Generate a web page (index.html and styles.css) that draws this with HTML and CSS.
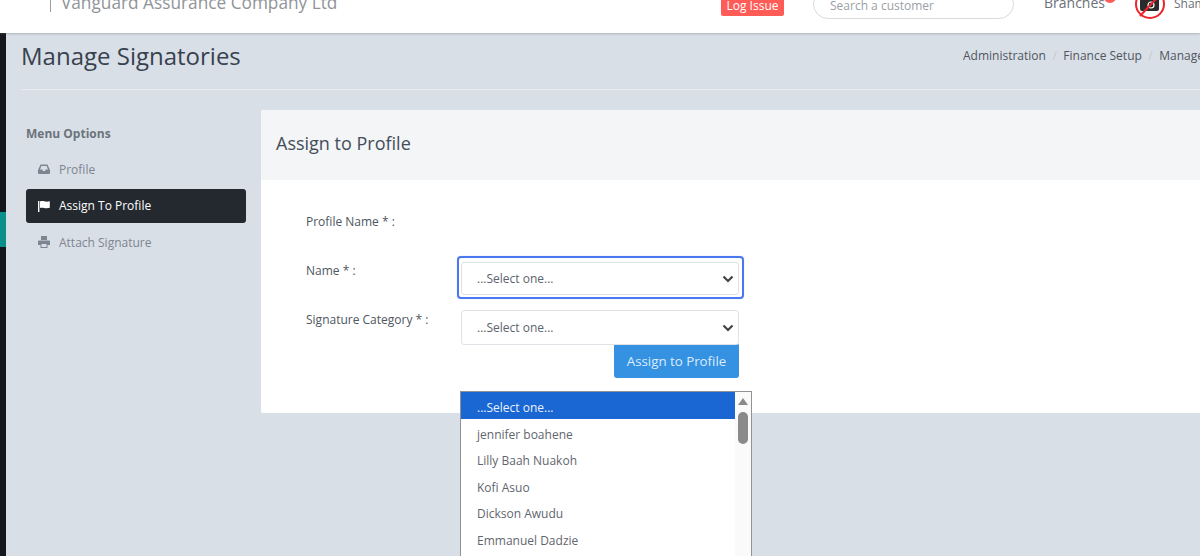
FILE: index.html
```html
<!DOCTYPE html>
<html lang="en">
<head>
<meta charset="utf-8">
<title>Manage Signatories</title>
<link rel="stylesheet" href="styles.css">
</head>
<body>
<header class="topbar">
  <div class="company"><span class="pipe"></span>Vanguard Assurance Company Ltd</div>
  <div class="top-right">
    <span class="log-issue">Log Issue</span>
    <span class="search">Search a customer</span>
    <span class="branches">Branches<i class="badge"></i></span>
    <svg class="avatar" width="32" height="20" viewBox="0 0 32 20">
      <rect x="6" y="-4" width="19" height="15" rx="2" fill="#2b2b2b"/>
      <circle cx="17" cy="5" r="3" fill="none" stroke="#fff" stroke-width="1.2"/>
      <circle cx="16" cy="4" r="14" fill="none" stroke="#f0222a" stroke-width="2"/>
      <path d="M6 16 L23 -2" stroke="#f0222a" stroke-width="2"/>
    </svg>
    <span class="user">Shamsu Deen</span>
  </div>
</header>
<div class="layout">
  <div class="rail"><div class="rail-teal"></div></div>
  <main class="main">
    <div class="page-head">
      <h1>Manage Signatories</h1>
      <nav class="crumbs">
        <span>Administration</span><b>/</b><span>Finance Setup</span><b>/</b><span>Manage Signatories</span>
      </nav>
    </div>
    <div class="columns">
      <aside class="menu">
        <h2>Menu Options</h2>
        <a class="item">
          <svg width="12" height="12" viewBox="0 0 12 12"><path d="M2.6 1.500h6.800L12 7v3a1 1 0 0 1-1 1H1a1 1 0 0 1-1-1V7zM3.400 3L2 6.500h2.400L5 8h2l.6-1.500H10L8.600 3z" fill="#7d8590" fill-rule="evenodd"/></svg>
          Profile</a>
        <a class="item active">
          <svg width="13" height="12" viewBox="0 0 13 12"><path d="M0 1h1.400v11H0zM2 1.600c3-1.600 5 1 9.800-.4v6.600C7 9.200 5 6.800 2 8z" fill="#fff"/></svg>
          Assign To Profile</a>
        <a class="item">
          <svg width="12" height="12" viewBox="0 0 12 12"><path d="M3 0h6v4H3zM1 4.500h10a1 1 0 0 1 1 1V9H9.500v3h-7V9H0V5.500a1 1 0 0 1 1-1zM3.500 8v3h5V8z" fill="#7d8590" fill-rule="evenodd"/></svg>
          Attach Signature</a>
      </aside>
      <section class="panel">
        <div class="panel-head">Assign to Profile</div>
        <form class="panel-body">
          <div class="row row-profile"><label>Profile Name * :</label></div>
          <div class="row">
            <label>Name * :</label>
            <div class="focus-ring"><div class="select">...Select one...<svg class="chev" width="12" height="8" viewBox="0 0 12 8"><path d="M1.500 1.500L6 6l4.500-4.500" fill="none" stroke="#444" stroke-width="2.200"/></svg></div></div>
          </div>
          <div class="row">
            <label>Signature Category * :</label>
            <div class="select plain">...Select one...<svg class="chev" width="12" height="8" viewBox="0 0 12 8"><path d="M1.500 1.500L6 6l4.500-4.500" fill="none" stroke="#444" stroke-width="2.200"/></svg></div>
          </div>
          <div class="actions"><button type="button" class="btn">Assign to Profile</button></div>
        </form>
      </section>
    </div>
  </main>
</div>
<div class="dropdown">
  <ul class="options">
    <li class="selected">...Select one...</li>
    <li>jennifer boahene</li>
    <li>Lilly Baah Nuakoh</li>
    <li>Kofi Asuo</li>
    <li>Dickson Awudu</li>
    <li>Emmanuel Dadzie</li>
    <li>Samuel Owusu</li>
  </ul>
  <div class="scrollbar">
    <svg width="10" height="7" viewBox="0 0 10 7"><path d="M5 0L10 7H0z" fill="#8a8a8a"/></svg>
    <div class="thumb"></div>
  </div>
</div>
</body>
</html>
```
FILE: styles.css
```css
* { box-sizing: border-box; }
html, body { margin: 0; height: 556px; overflow: hidden; }
body {
  background: #d9dfe7;
  font-family: "Open Sans", "Noto Sans", sans-serif;
  font-size: 12px;
  color: #4e5660;
  position: relative;
}
.topbar {
  height: 33px;
  background: #fff;
  box-shadow: 0 1px 2px rgba(90, 100, 110, .35);
  position: relative;
  z-index: 2;
  overflow: hidden;
  display: flex;
  justify-content: space-between;
  align-items: flex-end;
}
.company {
  margin-left: 50px;
  font-size: 17.25px;
  line-height: 22px;
  height: 22px;
  margin-bottom: 19px;
  color: #909498;
  display: flex;
  white-space: nowrap;
}
.pipe { width: 1px; height: 20px; background: #9aa0a6; margin-right: 10px; flex: none; }
.top-right { display: flex; align-items: flex-end; flex: none; width: 479px; white-space: nowrap; }
.log-issue {
  background: #ff5b57;
  color: #fff;
  width: 63px;
  height: 24px;
  margin-bottom: 17px;
  border-radius: 2px;
  text-align: center;
  font-size: 12px;
  padding-top: 5px;
  line-height: 17px;
  flex: none;
}
.search {
  width: 201px;
  height: 30px;
  margin: 0 0 14px 29px;
  border: 1px solid #d8dadd;
  border-radius: 15px;
  padding: 9px 0 0 16px;
  color: #9aa0a6;
  font-size: 12px;
  line-height: 14px;
  flex: none;
}
.branches {
  margin: 0 0 21px 30px;
  font-size: 14px;
  line-height: 18px;
  color: #6a7077;
  position: relative;
  width: 91px;
  flex: none;
}
.badge {
  position: absolute;
  left: 60px;
  top: 3px;
  width: 12px;
  height: 6px;
  border-radius: 0 0 6px 6px;
  background: #ff5b57;
}
.avatar { flex: none; margin: 0 0 13px -1px; overflow: visible; }
.user { margin: 0 0 20px 8px; font-size: 12px; line-height: 18px; color: #6a7077; }
.layout { display: flex; height: 523px; }
.rail {
  width: 6px;
  flex: none;
  background: #14181c;
  padding-top: 179px;
}
.rail-teal { height: 35px; background: #0a8f8a; }
.main { flex: 1; padding: 0 0 0 15px; min-width: 0; }
.page-head {
  display: flex;
  justify-content: space-between;
  align-items: center;
  height: 57px;
  margin-bottom: 20px;
  border-bottom: 1px solid #e7ebf0;
  white-space: nowrap;
  margin-right: -400px;
}
h1 {
  margin: 0 0 11px;
  font-weight: 400;
  font-size: 24px;
  line-height: 46px;
  color: #37424e;
}
.crumbs {
  display: flex;
  width: 637px;
  flex: none;
  font-size: 12px;
  color: #4e5660;
  margin-bottom: 12px;
}
.crumbs b { font-weight: 400; color: #c3c9cf; margin: 0 6.5px; }
.columns { display: flex; }
.menu { width: 225px; padding-left: 5px; flex: none; }
.menu h2 {
  margin: 14px 0 0;
  font-size: 12px;
  line-height: 20px;
  font-weight: 700;
  color: #6c737b;
}
.item {
  display: flex;
  align-items: center;
  height: 34px;
  margin-top: 3px;
  padding-left: 12px;
  gap: 9px;
  border-radius: 3px;
  color: #7d8590;
  font-size: 12px;
}
.menu h2 + .item { margin-top: 8px; }
.item.active { background: #24282f; color: #fff; gap: 8px; margin-bottom: -1px; line-height: 33px; padding-bottom: 1px; }
.panel {
  width: 1000px;
  flex: none;
  margin-left: 15px;
  background: #fff;
  height: 303px;
  border-radius: 2px 0 0 2px;
  overflow: hidden;
}
.panel-head {
  height: 70px;
  background: #f3f5f7;
  padding-left: 15px;
  font-size: 18px;
  line-height: 66px;
  color: #434d58;
}
.panel-body { padding: 33px 0 0 45px; }
.row { display: flex; align-items: flex-start; height: 49px; }
.row label { width: 155px; flex: none; line-height: 17px; color: #4e5660; }
.select {
  width: 278px;
  height: 35px;
  background: #fff;
  border: 1px solid #dfe2e6;
  border-radius: 3px;
  padding-left: 15px;
  line-height: 33px;
  color: #5c646d;
  position: relative;
  flex: none;
}
.select.plain { margin-top: -1px; }
.chev { position: absolute; right: 4px; top: 13px; }
.focus-ring {
  margin: -6px 0 0 -4px;
  padding: 4px 3px 0 2px;
  border: 2px solid #4a78f0;
  border-radius: 4px;
  width: 287px;
  height: 43px;
  box-shadow: 0 0 1px rgba(74, 120, 240, .5);
  flex: none;
}
.focus-ring .select { height: 33px; line-height: 31px; }
.focus-ring .chev { top: 12px; }
.actions { width: 433px; display: flex; justify-content: flex-end; margin-top: -17px; }
.btn {
  width: 125px;
  height: 35px;
  border: 0;
  border-radius: 3px;
  background: #3592e3;
  color: #dcebfa;
  font: 13.3px "Open Sans", sans-serif;
  padding: 0;
}
.dropdown {
  position: absolute;
  left: 460px;
  top: 391px;
  width: 292px;
  height: 190px;
  background: #fff;
  border: 1px solid #8f9296;
  display: flex;
  z-index: 3;
}
.options { list-style: none; margin: 0; padding: 0; flex: 1; }
.options li {
  height: 26.6px;
  padding: 5px 0 0 16px;
  line-height: 21.6px;
  color: #5f666e;
}
.options li.selected { background: #1a66d2; color: #e9f1fc; }
.scrollbar {
  width: 16px;
  flex: none;
  background: #fafafa;
  padding-top: 6px;
  display: flex;
  flex-direction: column;
  align-items: center;
}
.scrollbar svg { flex: none; display: block; }
.thumb { width: 10px; height: 32px; margin-top: 7px; border-radius: 5px; background: #8a8a8a; }
```
